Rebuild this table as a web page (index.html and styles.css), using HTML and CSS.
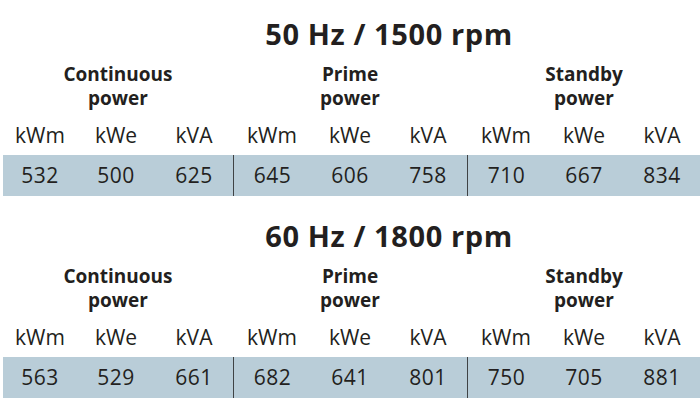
FILE: index.html
```html
<!DOCTYPE html>
<html lang="en">
<head>
    <meta charset="UTF-8">
    <title>Generator ratings</title>
    <link rel="stylesheet" href="styles.css">
</head>
<body>
    <section class="block">
        <h2 class="title">50 Hz / 1500 rpm</h2>
        <div class="grid">
            <div class="group">Continuous<br>power</div>
            <div class="group">Prime<br>power</div>
            <div class="group">Standby<br>power</div>

            <div class="unit">kWm</div><div class="unit">kWe</div><div class="unit">kVA</div>
            <div class="unit">kWm</div><div class="unit">kWe</div><div class="unit">kVA</div>
            <div class="unit">kWm</div><div class="unit">kWe</div><div class="unit">kVA</div>

            <div class="value">532</div><div class="value">500</div><div class="value">625</div>
            <div class="value split">645</div><div class="value">606</div><div class="value">758</div>
            <div class="value split">710</div><div class="value">667</div><div class="value">834</div>
        </div>
    </section>

    <section class="block">
        <h2 class="title">60 Hz / 1800 rpm</h2>
        <div class="grid">
            <div class="group">Continuous<br>power</div>
            <div class="group">Prime<br>power</div>
            <div class="group">Standby<br>power</div>

            <div class="unit">kWm</div><div class="unit">kWe</div><div class="unit">kVA</div>
            <div class="unit">kWm</div><div class="unit">kWe</div><div class="unit">kVA</div>
            <div class="unit">kWm</div><div class="unit">kWe</div><div class="unit">kVA</div>

            <div class="value">563</div><div class="value">529</div><div class="value">661</div>
            <div class="value split">682</div><div class="value">641</div><div class="value">801</div>
            <div class="value split">750</div><div class="value">705</div><div class="value">881</div>
        </div>
    </section>
</body>
</html>
```

FILE: styles.css
```css
body {
    margin: 0;
    padding: 0 0 0 3px;
    font-family: "Open Sans", Arial, sans-serif;
    color: #231f20;
    background-color: #ffffff;
    overflow: hidden;
}

.block {
    padding-top: 17px;
}

.block + .block {
    margin-top: 6px;
}

.title {
    margin: 0;
    padding-left: 75px;
    text-align: center;
    font-size: 29px;
    line-height: 34px;
    font-weight: 700;
    letter-spacing: 0.6px;
}

.grid {
    display: grid;
    grid-template-columns: 74px repeat(8, 78px);
}

.group {
    grid-column: span 3;
    margin-top: 11px;
    text-align: center;
    font-size: 19px;
    line-height: 24px;
    font-weight: 700;
}

.unit {
    margin-top: 13px;
    margin-bottom: 8px;
    text-align: center;
    font-size: 21px;
    line-height: 24px;
}

.value {
    text-align: center;
    font-size: 21px;
    line-height: 41px;
    letter-spacing: 0.5px;
    background-color: #b9cdd8;
}

.split {
    border-left: 1px solid #3f4244;
}
```
